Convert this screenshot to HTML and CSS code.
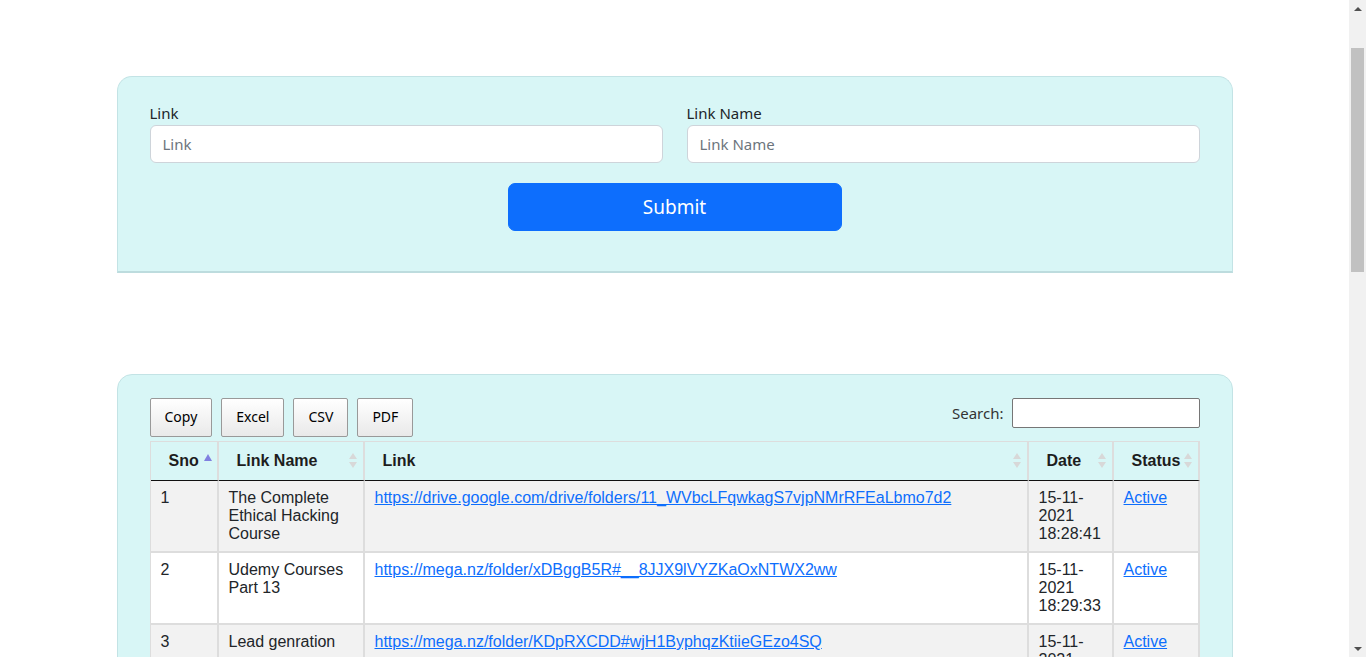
FILE: index.html
```html
<!DOCTYPE html>
<html lang="en">
<head>
<meta charset="utf-8">
<title>Links</title>
<link rel="stylesheet" href="styles.css">
</head>
<body>
<div class="container">
  <form class="card card-form">
    <div class="form-row">
      <div class="field">
        <label class="label" for="link">Link</label>
        <input class="control" id="link" type="text" placeholder="Link">
      </div>
      <div class="field">
        <label class="label" for="lname">Link Name</label>
        <input class="control" id="lname" type="text" placeholder="Link Name">
      </div>
    </div>
    <div class="submit-row">
      <button class="btn-submit" type="button">Submit</button>
    </div>
  </form>

  <div class="card card-table">
    <div class="toolbar">
      <div class="dt-buttons">
        <button class="dt-button" type="button">Copy</button>
        <button class="dt-button" type="button">Excel</button>
        <button class="dt-button" type="button">CSV</button>
        <button class="dt-button" type="button">PDF</button>
      </div>
      <label class="search">Search:<input class="search-input" type="search"></label>
    </div>
    <table class="data">
      <colgroup>
        <col class="c-sno"><col class="c-name"><col class="c-link"><col class="c-date"><col class="c-status">
      </colgroup>
      <thead>
        <tr>
          <th class="sort asc">Sno</th>
          <th class="sort both">Link Name</th>
          <th class="sort both">Link</th>
          <th class="sort both">Date</th>
          <th class="sort both">Status</th>
        </tr>
      </thead>
      <tbody>
        <tr class="odd"><td>1</td><td>The Complete Ethical Hacking Course</td><td><a href="#">https://drive.google.com/drive/folders/11_WVbcLFqwkagS7vjpNMrRFEaLbmo7d2</a></td><td>15-11-2021 18:28:41</td><td><a href="#">Active</a></td></tr>
        <tr><td>2</td><td>Udemy Courses Part 13</td><td><a href="#">https://mega.nz/folder/xDBggB5R#__8JJX9lVYZKaOxNTWX2ww</a></td><td>15-11-2021 18:29:33</td><td><a href="#">Active</a></td></tr>
        <tr class="odd"><td>3</td><td>Lead genration</td><td><a href="#">https://mega.nz/folder/KDpRXCDD#wjH1ByphqzKtiieGEzo4SQ</a></td><td>15-11-2021 18:30:12</td><td><a href="#">Active</a></td></tr>
        <tr><td>4</td><td>Udemy Courses Part 14</td><td><a href="#">https://mega.nz/folder/xDBggB5R#__8JJX9lVYZKaOxNTWX2ww</a></td><td>15-11-2021 18:31:05</td><td><a href="#">Active</a></td></tr>
        <tr class="odd"><td>5</td><td>Web Development Bootcamp</td><td><a href="#">https://mega.nz/folder/KDpRXCDD#wjH1ByphqzKtiieGEzo4SQ</a></td><td>15-11-2021 18:32:47</td><td><a href="#">Active</a></td></tr>
        <tr><td>6</td><td>Python Masterclass</td><td><a href="#">https://drive.google.com/drive/folders/11_WVbcLFqwkagS7vjpNMrRFEaLbmo7d2</a></td><td>15-11-2021 18:33:20</td><td><a href="#">Active</a></td></tr>
        <tr class="odd"><td>7</td><td>Digital Marketing</td><td><a href="#">https://mega.nz/folder/xDBggB5R#__8JJX9lVYZKaOxNTWX2ww</a></td><td>15-11-2021 18:34:02</td><td><a href="#">Active</a></td></tr>
        <tr><td>8</td><td>Android Development</td><td><a href="#">https://mega.nz/folder/KDpRXCDD#wjH1ByphqzKtiieGEzo4SQ</a></td><td>15-11-2021 18:35:41</td><td><a href="#">Active</a></td></tr>
        <tr class="odd"><td>9</td><td>Graphic Design</td><td><a href="#">https://mega.nz/folder/xDBggB5R#__8JJX9lVYZKaOxNTWX2ww</a></td><td>15-11-2021 18:36:18</td><td><a href="#">Active</a></td></tr>
        <tr><td>10</td><td>Excel Course</td><td><a href="#">https://mega.nz/folder/KDpRXCDD#wjH1ByphqzKtiieGEzo4SQ</a></td><td>15-11-2021 18:37:55</td><td><a href="#">Active</a></td></tr>
      </tbody>
    </table>
    <div class="footer">
      <div class="info">Showing 1 to 10 of 13 entries</div>
      <div class="paginate"><span class="pg">Previous</span><span class="pg current">1</span><span class="pg">2</span><span class="pg">Next</span></div>
    </div>
  </div>
</div>

<div class="scrollbar" aria-hidden="true">
  <div class="sb-arrow sb-up"></div>
  <div class="sb-track"><div class="sb-thumb"></div></div>
  <div class="sb-arrow sb-down"></div>
</div>
</body>
</html>
```

FILE: styles.css
```css
* { box-sizing: border-box; }

html, body {
  margin: 0;
  padding: 0;
  background: #ffffff;
}

body {
  font-family: "Noto Sans", "Open Sans", sans-serif;
  font-size: 15px;
  line-height: 1.5;
  color: #212529;
  padding-right: 17px;
}

.container {
  width: 1116px;
  margin: 0 auto;
  padding-bottom: 120px;
}

.card {
  background: #d8f6f6;
  border: 1px solid #c3e3e5;
  border-radius: 15px 15px 0 0;
}

.card-form {
  margin-top: 76px;
  padding: 24px 32px 40px 32px;
  border-bottom: 2px solid #bddcde;
}

.form-row {
  display: flex;
  gap: 24px;
}

.field {
  flex: 1 1 0;
  display: flex;
  flex-direction: column;
}

.label {
  display: block;
  line-height: 24px;
  font-size: 15px;
  color: #212529;
}

.control {
  display: block;
  width: 100%;
  height: 38px;
  padding: 6px 12px;
  font-family: inherit;
  font-size: 15px;
  line-height: 24px;
  color: #212529;
  background: #fff;
  border: 1px solid #ced4da;
  border-radius: 6px;
  outline: none;
}

.control::placeholder { color: #6c757d; }

.submit-row {
  display: flex;
  justify-content: center;
  margin-top: 20px;
}

.btn-submit {
  width: 334px;
  height: 48px;
  font-family: inherit;
  font-size: 19px;
  line-height: 30px;
  color: #fff;
  background: #0d6efd;
  border: 1px solid #0d6efd;
  border-radius: 7px;
  padding: 8px 16px;
}

.card-table {
  margin-top: 101px;
  padding: 23px 32px 40px 32px;
}

.toolbar {
  display: flex;
  justify-content: space-between;
  align-items: flex-start;
  margin-bottom: 4px;
}

.dt-buttons {
  display: flex;
  gap: 9px;
}

.dt-button {
  font-family: inherit;
  font-size: 14px;
  line-height: 23px;
  height: 39px;
  padding: 6px 14px 8px;
  color: #000;
  border: 1px solid #999;
  border-radius: 2px;
  background: linear-gradient(to bottom, #ffffff 0%, #e9e9e9 100%);
}

.search {
  display: flex;
  align-items: center;
  gap: 8px;
  font-size: 15px;
  line-height: 30px;
  color: #333;
}

.search-input {
  width: 188px;
  height: 30px;
  border: 1px solid #767676;
  border-radius: 2px;
  background: #fff;
  padding: 2px 4px;
  outline: none;
}

.data {
  width: 1049px;
  table-layout: fixed;
  border-collapse: separate;
  border-spacing: 0;
  font-family: "Liberation Sans", Arial, sans-serif;
  font-size: 16px;
  line-height: 18px;
  color: #212529;
  border-left: 1px solid #dddddd;
}

.c-sno { width: 68px; }
.c-name { width: 146px; }
.c-link { width: 664px; }
.c-date { width: 85px; }
.c-status { width: 86px; }

.data th {
  position: relative;
  text-align: left;
  font-weight: bold;
  padding: 10px 18px;
  border-top: 1px solid #dddddd;
  border-right: 2px solid #dddddd;
  border-bottom: 1px solid #111111;
  color: #1d1d1d;
}

.data td {
  padding: 8px 10px;
  vertical-align: top;
  border-right: 2px solid #dddddd;
  border-bottom: 2px solid #dddddd;
  background: #ffffff;
  overflow-wrap: break-word;
}

.data tr.odd td { background: #f2f2f2; }

.data a {
  color: #0d6efd;
  text-decoration: underline;
}

.sort.asc::after {
  content: "";
  position: absolute;
  right: 5px;
  top: 12px;
  border-left: 4.5px solid transparent;
  border-right: 4.5px solid transparent;
  border-bottom: 7px solid #8080e0;
}

.sort.both::before,
.sort.both::after {
  content: "";
  position: absolute;
  right: 6px;
  border-left: 4px solid transparent;
  border-right: 4px solid transparent;
}

.sort.both::before {
  top: 11px;
  border-bottom: 6px solid #d8d8d8;
}

.sort.both::after {
  top: 20px;
  border-top: 6px solid #d8d8d8;
}

.footer {
  display: flex;
  justify-content: space-between;
  align-items: center;
  padding-top: 12px;
  font-size: 14px;
  color: #333;
}

.paginate {
  display: flex;
  gap: 2px;
}

.pg {
  padding: 6px 12px;
  border: 1px solid transparent;
  border-radius: 2px;
}

.pg.current {
  border-color: #979797;
  background: linear-gradient(to bottom, #ffffff 0%, #dcdcdc 100%);
}

/* Browser scrollbar as it appears in the reference */
.scrollbar {
  position: fixed;
  top: 0;
  right: 0;
  bottom: 0;
  width: 17px;
  background: #f1f1f1;
  display: flex;
  flex-direction: column;
}

.sb-arrow {
  height: 17px;
  flex: 0 0 17px;
  display: flex;
  align-items: center;
  justify-content: center;
}

.sb-up::before,
.sb-down::before {
  content: "";
  border-left: 4px solid transparent;
  border-right: 4px solid transparent;
}

.sb-up::before { border-bottom: 4px solid #505050; }
.sb-down::before { border-top: 4px solid #505050; }

.sb-track {
  flex: 1 1 auto;
  padding: 31px 2px 0 2px;
}

.sb-thumb {
  height: 224px;
  background: #c1c1c1;
}
```
